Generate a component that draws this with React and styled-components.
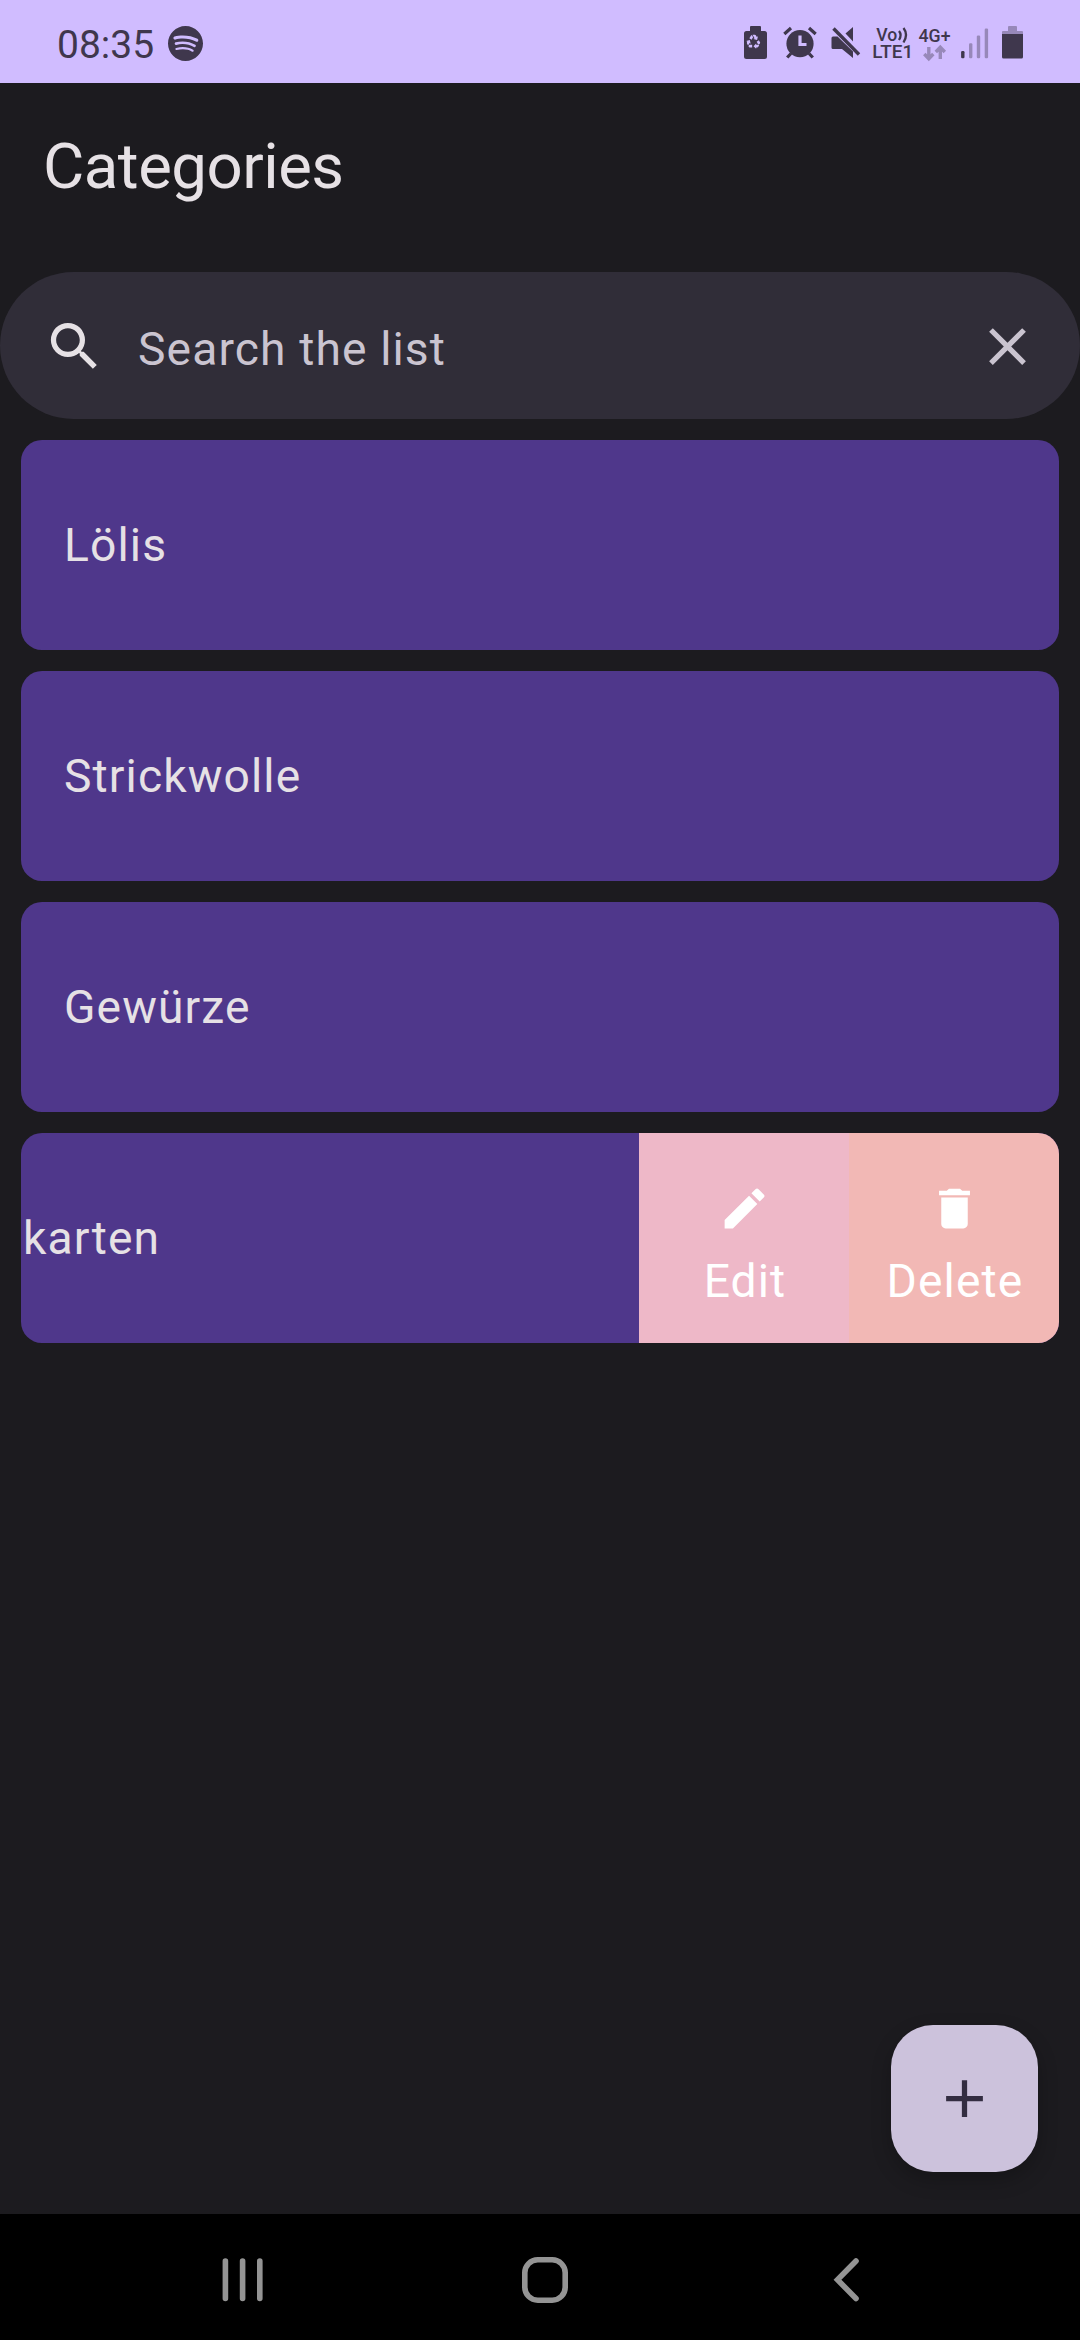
import React from "react";
import styled, { createGlobalStyle, css } from "styled-components";
import { MdAdd, MdClose, MdDelete, MdEdit, MdSearch, MdRecycling } from "react-icons/md";
import { SiSpotify } from "react-icons/si";

const color = {
  primary: "#d0bcff",
  onPrimary: "#3f374d",
  onPrimaryDim: "#9788b9",
  background: "#1c1b1f",
  onBackground: "#e6e1e5",
  search: "#302d38",
  onSearch: "#cac4d0",
  card: "#4f378b",
  edit: "#eeb8c8",
  remove: "#f2b8b5",
  fab: "#ccc2dc",
  onFab: "#332d41",
  nav: "#949494",
};

const GlobalStyle = createGlobalStyle`
  * { box-sizing: border-box; }
  body {
    margin: 0;
    background: ${color.background};
    font-family: Roboto, "Liberation Sans", sans-serif;
  }
`;

const bodyText = css`
  font-size: 46.2px;
  line-height: 66px;
  letter-spacing: 1.12px;
  white-space: nowrap;
`;

const Screen = styled.div`
  display: flex;
  flex-direction: column;
  width: 1080px;
  height: 2340px;
  background: ${color.background};
  color: ${color.onBackground};
  overflow: hidden;
`;

const StatusBar = styled.header`
  display: flex;
  align-items: center;
  height: 83px;
  padding: 3px 57px 0 57px;
  background: ${color.primary};
  color: ${color.onPrimary};
`;

const Clock = styled.time`
  width: 111px;
  font-size: 39px;
  line-height: 46px;
  padding-top: 3px;
`;

const StatusIcons = styled.div`
  display: flex;
  margin-left: auto;
`;

const Glyph = styled.svg`
  display: block;
  width: ${(p) => p.$w}px;
  height: 36px;
  margin-left: ${(p) => p.$gap || 0}px;
  overflow: visible;
  fill: currentColor;
  font-family: Roboto, "Liberation Sans", sans-serif;
  font-weight: 500;
`;

const Main = styled.main`
  display: flex;
  flex-direction: column;
  flex: 1;
`;

const Title = styled.h1`
  height: 189px;
  margin: 0;
  padding: 47px 42px 0 43px;
  font-size: 63.5px;
  font-weight: 400;
  line-height: 74px;
  letter-spacing: -0.5px;
`;

const SearchBar = styled.div`
  display: flex;
  align-items: center;
  height: 147px;
  padding: 2px 41px 0 43px;
  border-radius: 74px;
  background: ${color.search};
  color: ${color.onSearch};
  svg { display: block; flex: none; }
`;

const SearchIcon = styled(MdSearch)`
  color: ${color.onBackground};
`;

const Placeholder = styled.span`
  ${bodyText}
  flex: 1;
  padding: 4px 0 0 32px;
`;

const List = styled.ul`
  display: flex;
  flex-direction: column;
  gap: 21px;
  margin: 0;
  padding: 21px;
  list-style: none;
`;

const Row = styled.li`
  display: flex;
  height: 210px;
  border-radius: 21px;
  background: ${color.card};
  overflow: hidden;
`;

const RowLabel = styled.span`
  ${bodyText}
  flex: 1;
  align-self: center;
  padding-left: ${(p) => (p.$swiped ? 2 : 43)}px;
`;

const Action = styled.button`
  display: flex;
  flex-direction: column;
  align-items: center;
  width: 210px;
  padding: 49px 0 0;
  border: 0;
  background: ${(p) => p.$bg};
  color: #fff;
  font-family: inherit;
  svg { display: block; }
`;

const ActionLabel = styled.span`
  ${bodyText}
  margin-top: 13px;
  padding-left: 2px;
`;

const Fab = styled.button`
  display: flex;
  align-items: center;
  justify-content: center;
  width: 147px;
  height: 147px;
  margin: auto 42px 42px auto;
  padding: 0;
  border: 0;
  border-radius: 42px;
  background: ${color.fab};
  color: ${color.onFab};
  box-shadow: 0 8px 20px rgba(0, 0, 0, 0.24);
`;

const NavBar = styled.nav`
  display: flex;
  align-items: center;
  height: 126px;
  padding: 6px 219px 0 220px;
  justify-content: space-between;
  background: #000;
  svg {
    display: block;
    fill: none;
    stroke: ${color.nav};
    stroke-width: 5.6;
    stroke-linecap: round;
  }
`;

const HomeIcon = styled.svg`
  margin-right: 7px;
`;

function BatterySaverGlyph() {
  return (
    <Glyph $w={23} viewBox="0 0 23 36">
      <path d="M7 1h9q1 0 1 1v4h3.500q2.500 0 2.500 2.500v23q0 2.500-2.500 2.500h-18Q0 34 0 31.500v-23Q0 6 2.500 6H6V2q0-1 1-1z" />
      <MdRecycling x="1.500" y="8.500" width="20" height="20" color={color.primary} />
    </Glyph>
  );
}

function AlarmGlyph() {
  return (
    <Glyph $w={34} $gap={16} viewBox="0 0 34 36">
      <g stroke="currentColor" strokeWidth="3.200">
        <path d="M1.300 9L8 3M32.700 9L26 3M8 28.500L4.200 32.500M26 28.500L29.800 32.500" />
      </g>
      <circle cx="17" cy="18.700" r="13.600" />
      <path d="M17 10.500v9h6.500" fill="none" stroke={color.primary} strokeWidth="3.200" />
    </Glyph>
  );
}

function MuteGlyph() {
  return (
    <Glyph $w={30} $gap={14} viewBox="0 0 30 36">
      <path d="M22 2v14.500L14.500 8.500z" />
      <path d="M0.500 13q0-1.500 1.500-1.500h4.500L22 26.500V33L11 24H2q-1.500 0-1.500-1.500z" />
      <path d="M2.500 3.500L28 29.500" fill="none" stroke="currentColor" strokeWidth="3.400" />
    </Glyph>
  );
}

function VolteGlyph() {
  return (
    <Glyph $w={40} $gap={12} viewBox="0 0 40 36">
      <text x="3.300" y="15.700" fontSize="18.500" textLength="21" lengthAdjust="spacingAndGlyphs">Vo</text>
      <path
        d="M26 6q3.200 4 0 9M30.500 3q5 6.500 0 14.500"
        fill="none"
        stroke="currentColor"
        strokeWidth="2.300"
      />
      <text x="-0.700" y="33.300" fontSize="18.700" textLength="41" lengthAdjust="spacingAndGlyphs">LTE1</text>
    </Glyph>
  );
}

function MobileDataGlyph() {
  return (
    <Glyph $w={32} $gap={6} viewBox="0 0 32 36">
      <text x="-0.500" y="16.500" fontSize="17.800" textLength="32" lengthAdjust="spacingAndGlyphs">4G+</text>
      <path
        d="M9.800 22v11M5.300 29l4.500 4.700L14.300 29M21.300 34V22.500M16.800 27l4.500-4.700L25.800 27"
        fill="none"
        stroke={color.onPrimaryDim}
        strokeWidth="3.400"
      />
    </Glyph>
  );
}

function SignalGlyph() {
  return (
    <Glyph $w={27} $gap={10} viewBox="0 0 27 36">
      <g fill={color.onPrimaryDim}>
        <rect x="8" y="18.300" width="3.400" height="15" rx="1.200" />
        <rect x="15.800" y="10.500" width="3.400" height="22.800" rx="1.200" />
        <rect x="23.700" y="3.500" width="3.400" height="29.800" rx="1.200" />
      </g>
      <rect x="0.100" y="26" width="3.400" height="7.300" rx="1.200" />
    </Glyph>
  );
}

function BatteryGlyph() {
  return (
    <Glyph $w={21} $gap={14} viewBox="0 0 21 36">
      <path d="M7 1h7q1 0 1 1v4h5q1 0 1 1v3H0V7q0-1 1-1h5V2q0-1 1-1z" fill={color.onPrimaryDim} />
      <path d="M0 9h21v23q0 1.500-1.500 1.500h-18Q0 33.500 0 32z" />
    </Glyph>
  );
}

const categories = ["Lölis", "Strickwolle", "Gewürze"];

export default function App() {
  return (
    <Screen>
      <GlobalStyle />
      <StatusBar>
        <Clock>08:35</Clock>
        <SiSpotify size={35} />
        <StatusIcons>
          <BatterySaverGlyph />
          <AlarmGlyph />
          <MuteGlyph />
          <VolteGlyph />
          <MobileDataGlyph />
          <SignalGlyph />
          <BatteryGlyph />
        </StatusIcons>
      </StatusBar>

      <Main>
        <Title>Categories</Title>
        <SearchBar>
          <SearchIcon size={63} />
          <Placeholder>Search the list</Placeholder>
          <MdClose size={63} />
        </SearchBar>
        <List>
          {categories.map((name) => (
            <Row key={name}>
              <RowLabel>{name}</RowLabel>
            </Row>
          ))}
          <Row>
            <RowLabel $swiped>karten</RowLabel>
            <Action $bg={color.edit}>
              <MdEdit size={53} />
              <ActionLabel>Edit</ActionLabel>
            </Action>
            <Action $bg={color.remove}>
              <MdDelete size={53} />
              <ActionLabel>Delete</ActionLabel>
            </Action>
          </Row>
        </List>
        <Fab aria-label="Add category">
          <MdAdd size={63} />
        </Fab>
      </Main>

      <NavBar>
        <svg width="45" height="46" viewBox="0 0 45 46">
          <path d="M5.400 4v37.500M22.600 4v37.500M39.800 4v37.500" />
        </svg>
        <HomeIcon width="48" height="48" viewBox="0 0 48 48">
          <rect x="3.800" y="3.800" width="40.400" height="40.400" rx="13" />
        </HomeIcon>
        <svg width="30" height="46" viewBox="0 0 30 46">
          <path d="M25 4L6.500 22.800L25 41.500" />
        </svg>
      </NavBar>
    </Screen>
  );
}
